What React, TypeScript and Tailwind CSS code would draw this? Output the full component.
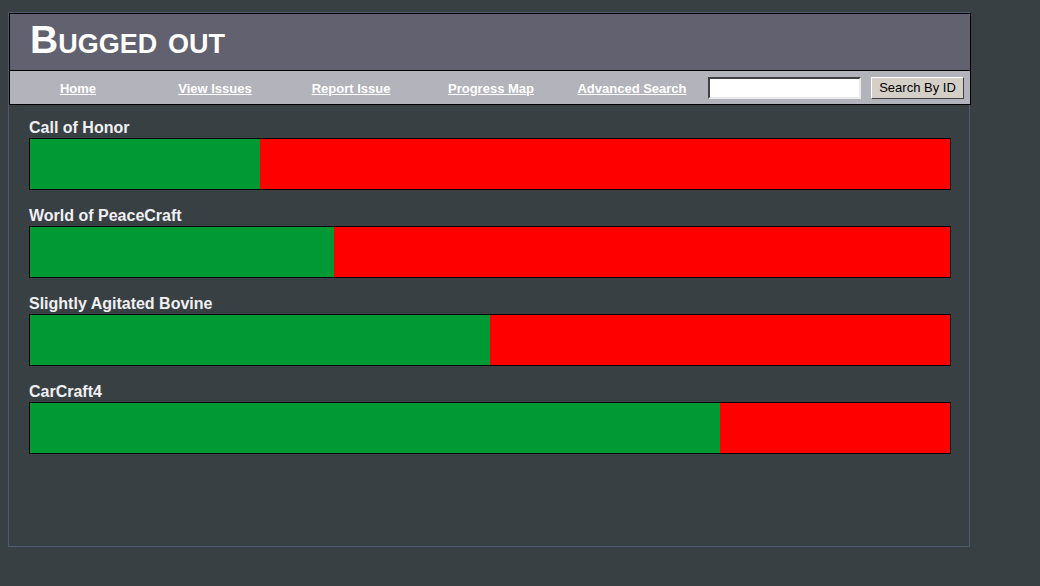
const links = [
  { label: 'Home', w: 'w-[136px]' },
  { label: 'View Issues', w: 'w-[138px]' },
  { label: 'Report Issue', w: 'w-[134px]' },
  { label: 'Progress Map', w: 'w-[146px]' },
  { label: 'Advanced Search', w: 'w-[136px]' },
];

const games = [
  { name: 'Call of Honor', done: 25 },
  { name: 'World of PeaceCraft', done: 33 },
  { name: 'Slightly Agitated Bovine', done: 50 },
  { name: 'CarCraft4', done: 75 },
];

export default function App() {
  return (
    <div className="min-h-[586px] bg-[#394043] pt-[12px] pl-[8px] font-['Liberation_Sans',Arial,sans-serif]">
      <div className="w-[962px] h-[535px] border border-[#4b5b70]">
        {/* Header + nav */}
        <div className="w-[962px] border border-black">
          <div className="h-[56px] bg-[#62616f] pt-[6px] pl-[20px]">
            <h1 className="text-[39px] leading-[40px] font-bold text-white [font-variant:small-caps]">
              Bugged out
            </h1>
          </div>
          <div className="h-[34px] bg-[#b3b3bb] border-t border-black flex items-center">
            {links.map((l) => (
              <div key={l.label} className={`${l.w} text-center`}>
                <a href="#" className="text-[13px] font-bold text-white underline">
                  {l.label}
                </a>
              </div>
            ))}
            <input
              type="text"
              className="ml-[8px] w-[153px] h-[22px] bg-white border-2 border-t-[#404040] border-l-[#404040] border-b-[#e8e8e8] border-r-[#e8e8e8] outline-none"
            />
            <button className="ml-[10px] w-[93px] h-[22px] bg-[#d4d0c8] border border-t-white border-l-white border-b-[#404040] border-r-[#404040] text-[13px] text-black leading-[20px]">
              Search By ID
            </button>
          </div>
        </div>

        {/* Progress bars */}
        <div className="pl-[20px] pr-[18px] pt-[14px]">
          {games.map((g) => (
            <div key={g.name} className="mb-[17px]">
              <h3 className="text-[16px] leading-[18px] font-bold text-[#f0f0f4]">{g.name}</h3>
              <div className="mt-[1px] h-[52px] border border-black bg-[#ff0000] flex">
                <div className="h-full bg-[#009933]" style={{ width: `${g.done}%` }} />
              </div>
            </div>
          ))}
        </div>
      </div>
    </div>
  );
}
